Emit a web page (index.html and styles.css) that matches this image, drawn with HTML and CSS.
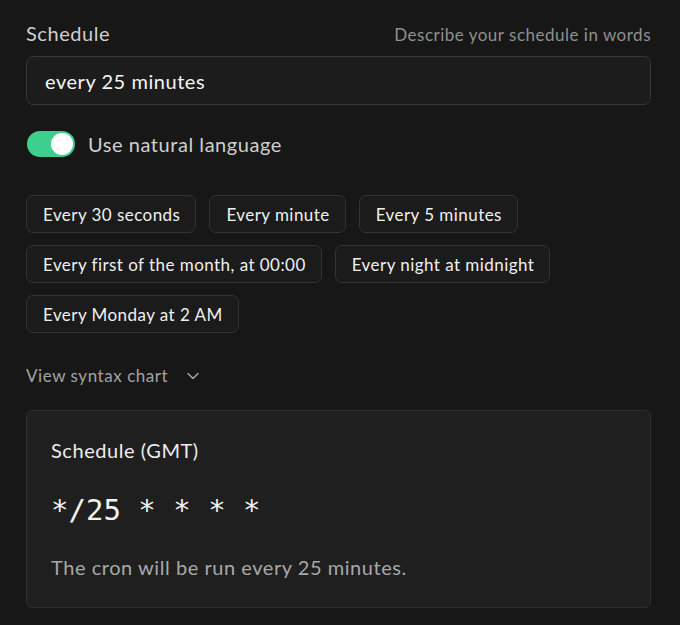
FILE: index.html
```html
<!DOCTYPE html>
<html>
<head>
<meta charset="utf-8">
<link rel="stylesheet" href="styles.css">
</head>
<body>
<div class="page">
  <div class="label-row">
    <span class="label">Schedule</span>
    <span class="hint">Describe your schedule in words</span>
  </div>
  <div class="input">every 25 minutes</div>
  <div class="toggle-row">
    <span class="toggle"><span class="knob"></span></span>
    <span class="toggle-label">Use natural language</span>
  </div>
  <div class="chips">
    <span class="chip">Every 30 seconds</span>
    <span class="chip">Every minute</span>
    <span class="chip">Every 5 minutes</span>
    <span class="chip">Every first of the month, at 00:00</span>
    <span class="chip">Every night at midnight</span>
    <span class="chip">Every Monday at 2 AM</span>
  </div>
  <div class="syntax">
    <span>View syntax chart</span>
    <svg class="chev" width="14" height="14" viewBox="0 0 14 14"><path d="M2 4.5 L7 9.5 L12 4.5" fill="none" stroke="#a0a0a0" stroke-width="1.6" stroke-linecap="round" stroke-linejoin="round"/></svg>
  </div>
  <div class="card">
    <div class="card-title">Schedule (GMT)</div>
    <div class="cron">*/25 * * * *</div>
    <div class="desc">The cron will be run every 25 minutes.</div>
  </div>
</div>
</body>
</html>
```
FILE: styles.css
```css
html, body {
  margin: 0;
  background: #171717;
}
body {
  font-family: "Lato", "Inter", sans-serif;
  color: #ededed;
  letter-spacing: 0.55px;
}
.page {
  width: 625px;
  padding: 21px 0 0 26px;
}
.label-row {
  display: flex;
  justify-content: space-between;
  align-items: baseline;
  height: 28px;
}
.label {
  font-size: 20px;
  color: #cfcfcf;
}
.hint {
  font-size: 17px;
  color: #8f8f8f;
  letter-spacing: 0.5px;
}
.input {
  margin-top: 7px;
  box-sizing: border-box;
  height: 49px;
  border: 1px solid #363636;
  border-radius: 7px;
  background: #1c1c1c;
  padding: 0 18px;
  display: flex;
  align-items: center;
  font-size: 20px;
  color: #f5f5f5;
}
.toggle-row {
  display: flex;
  align-items: center;
  margin-top: 26px;
  gap: 13px;
}
.toggle {
  width: 48px;
  height: 26px;
  border-radius: 13px;
  background: #3ecf8e;
  position: relative;
  margin-left: 1px;
}
.knob {
  position: absolute;
  right: 2px;
  top: 2px;
  width: 22px;
  height: 22px;
  border-radius: 50%;
  background: #ffffff;
}
.toggle-label {
  font-size: 20px;
  color: #cfcfcf;
}
.chips {
  margin-top: 38px;
  display: flex;
  flex-wrap: wrap;
  gap: 12px 13px;
  width: 560px;
}
.chip {
  height: 38px;
  box-sizing: border-box;
  border: 1px solid #333333;
  border-radius: 7px;
  background: #1b1b1b;
  padding: 0 15px 0 16px;
  display: flex;
  align-items: center;
  font-size: 17px;
  letter-spacing: 0.45px;
  color: #f0f0f0;
}
.syntax {
  margin-top: 32px;
  display: flex;
  align-items: center;
  gap: 18px;
  font-size: 17px;
  color: #a3a3a3;
}
.card {
  margin-top: 24px;
  box-sizing: border-box;
  height: 198px;
  border: 1px solid #2e2e2e;
  border-radius: 6px;
  background: #1f1f1f;
  padding: 27px 24px 0;
}
.card-title {
  font-size: 20px;
  color: #ededed;
}
.cron {
  margin-top: 31px;
  font-family: "DejaVu Sans Mono", "Liberation Mono", monospace;
  font-size: 29px;
  letter-spacing: 0;
  color: #f2f2f2;
}
.desc {
  margin-top: 28px;
  font-size: 20px;
  color: #a8a8a8;
}
```
